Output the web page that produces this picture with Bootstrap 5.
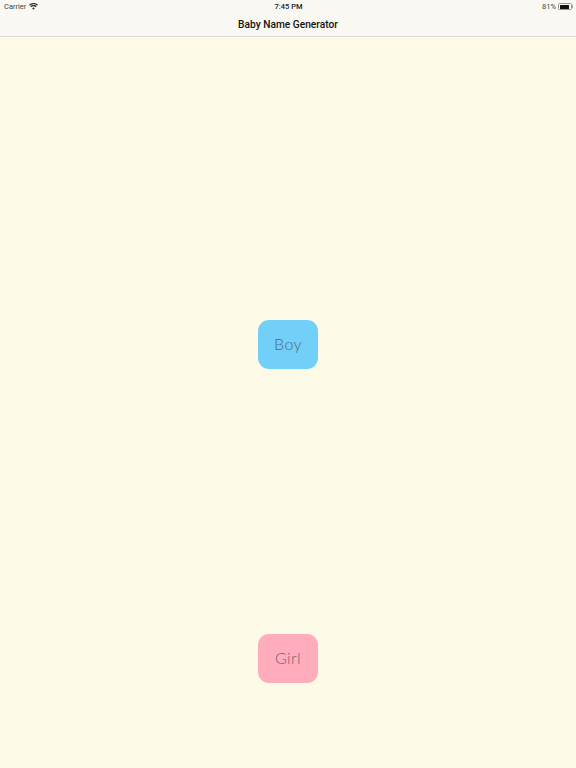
<!doctype html>
<html lang="en">
<head>
<meta charset="utf-8">
<title>Baby Name Generator</title>
<link rel="stylesheet" href="https://cdn.jsdelivr.net/npm/bootstrap@5.3.0/dist/css/bootstrap.min.css">
<style>
html, body { height: 100%; }
body { background: #fefae8; font-family: "Roboto", "Liberation Sans", sans-serif; overflow: hidden; }
.top-bar { background: #f9f8f2; height: 37px; border-bottom: 1px solid #dcdbd5; }
.status-row { height: 13px; padding: 0 3px 0 4px; font-size: 7.5px; color: #444; line-height: 12px; gap: 0; }
.status-side { flex: 1 1 0; }
.status-left { gap: 3px; }
.status-right { gap: 2px; }
.status-time { font-weight: 500; color: #222; }
.title-row { font-size: 10.2px; font-weight: 500; color: #111; height: 23px; line-height: 23px; }
.batt-body { width: 14px; height: 7px; border: 1px solid #999; border-radius: 1.5px; padding: .5px; display: block; }
.batt-fill { height: 100%; width: 85%; background: #111; border-radius: .5px; }
.batt-tip { width: 1px; height: 3px; background: #aaa; display: block; }
.page-main { padding-top: 283px; gap: 265.4px; }
.pick-btn { width: 60px; height: 49px; border: 0; border-radius: 11px; padding: 0 0 2px; font-size: 16px; font-weight: 300; font-family: "Lato", "Liberation Sans", sans-serif; letter-spacing: .4px; }
.pick-boy { background: #72d0f8; color: #4f6b7a; }
.pick-boy:hover, .pick-boy:active { background: #72d0f8 !important; color: #4f6b7a !important; }
.pick-girl { background: #ffadbd; color: #75636e; }
.pick-girl:hover, .pick-girl:active { background: #ffadbd !important; color: #75636e !important; }
</style>
</head>
<body>
<header class="top-bar">
  <div class="status-row d-flex align-items-center">
    <div class="status-side status-left d-flex align-items-center">
      <span>Carrier</span>
      <svg width="9" height="7" viewBox="0 0 18 13" aria-hidden="true"><path fill="#333" d="M9 13 6.3 9.9a4 4 0 0 1 5.4 0ZM4.6 8 2.8 6a9.3 9.3 0 0 1 12.4 0l-1.8 2a6.7 6.7 0 0 0-8.8 0ZM1.7 4.8 0 2.9a13.4 13.4 0 0 1 18 0l-1.7 1.9a11 11 0 0 0-14.6 0Z"/></svg>
    </div>
    <span class="status-time">7:45 PM</span>
    <div class="status-side status-right d-flex align-items-center justify-content-end">
      <span>81%</span>
      <span class="d-flex align-items-center">
        <span class="batt-body"><span class="batt-fill d-block"></span></span>
        <span class="batt-tip"></span>
      </span>
    </div>
  </div>
  <div class="title-row text-center">Baby Name Generator</div>
</header>
<main class="page-main d-flex flex-column align-items-center">
  <button type="button" class="btn pick-btn pick-boy">Boy</button>
  <button type="button" class="btn pick-btn pick-girl">Girl</button>
</main>
<script src="https://cdn.jsdelivr.net/npm/bootstrap@5.3.0/dist/js/bootstrap.bundle.min.js"></script>
</body>
</html>
